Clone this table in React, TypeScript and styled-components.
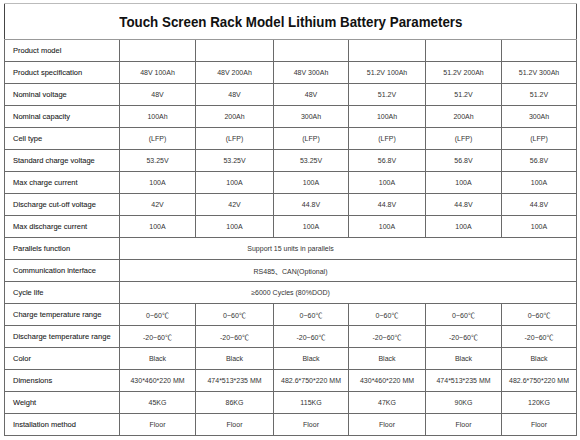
import * as React from "react";
import styled, { createGlobalStyle } from "styled-components";

const GlobalStyle = createGlobalStyle`
  html, body {
    margin: 0;
    padding: 0;
    background: #fff;
  }
  body {
    font-family: "Liberation Sans", "Noto Sans CJK SC", Arial, sans-serif;
  }
`;

const Page = styled.div`
  width: 580px;
  height: 440px;
  padding: 3px 0 0 4px;
  box-sizing: border-box;
`;

const Table = styled.table`
  width: 573px;
  border-collapse: collapse;
  table-layout: fixed;
  border-right: 1px solid #555;
  border-bottom: 1px solid #555;
  border-left: 1px solid #444;
`;

const TitleCell = styled.th`
  height: 35px;
  padding: 0;
  border-top: 1px solid #bbb;
  border-bottom: 1px solid #999;
  text-align: center;
  vertical-align: middle;
`;

const Title = styled.span`
  display: inline-block;
  font-size: 15px;
  font-weight: 700;
  color: #111;
  transform: scaleX(0.89);
  white-space: nowrap;
`;

const Row = styled.tr`
  height: 22px;
`;

const Label = styled.td`
  padding: 0 0 0 8px;
  border: 1px solid #6a6a6a;
  font-size: 7.5px;
  color: #1a1a1a;
  -webkit-text-stroke: 0.08px #1a1a1a;
  white-space: nowrap;
  overflow: hidden;
`;

const Cell = styled.td`
  padding: 0;
  border: 1px solid #6a6a6a;
  font-size: 7px;
  color: #333;
  text-align: center;
  white-space: nowrap;
`;

const SpanCell = styled(Cell)`
  padding-right: 115px;
`;

const widths = [115, 76, 78, 75, 77, 76, 75];

type Spec = { label: string; values?: string[]; span?: string };

const six = (v: string) => [v, v, v, v, v, v];

const specs: Spec[] = [
  { label: "Product model", values: six("") },
  {
    label: "Product specification",
    values: ["48V 100Ah", "48V 200Ah", "48V 300Ah", "51.2V 100Ah", "51.2V 200Ah", "51.2V 300Ah"],
  },
  { label: "Nominal voltage", values: ["48V", "48V", "48V", "51.2V", "51.2V", "51.2V"] },
  { label: "Nominal capacity", values: ["100Ah", "200Ah", "300Ah", "100Ah", "200Ah", "300Ah"] },
  { label: "Cell type", values: six("(LFP)") },
  {
    label: "Standard charge voltage",
    values: ["53.25V", "53.25V", "53.25V", "56.8V", "56.8V", "56.8V"],
  },
  { label: "Max charge current", values: six("100A") },
  {
    label: "Discharge cut-off voltage",
    values: ["42V", "42V", "44.8V", "44.8V", "44.8V", "44.8V"],
  },
  { label: "Max discharge current", values: six("100A") },
  { label: "Parallels function", span: "Support 15 units in parallels" },
  { label: "Communication interface", span: "RS485、CAN(Optional)" },
  { label: "Cycle life", span: "≥6000 Cycles (80%DOD)" },
  { label: "Charge temperature range", values: six("0~60℃") },
  { label: "Discharge temperature range", values: six("-20~60℃") },
  { label: "Color", values: six("Black") },
  {
    label: "Dimensions",
    values: [
      "430*460*220 MM",
      "474*513*235 MM",
      "482.6*750*220 MM",
      "430*460*220 MM",
      "474*513*235 MM",
      "482.6*750*220 MM",
    ],
  },
  { label: "Weight", values: ["45KG", "86KG", "115KG", "47KG", "90KG", "120KG"] },
  { label: "Installation method", values: six("Floor") },
];

const App = () => (
  <Page>
    <GlobalStyle />
    <Table>
      <colgroup>
        {widths.map((w, i) => (
          <col key={i} style={{ width: w }} />
        ))}
      </colgroup>
      <thead>
        <tr>
          <TitleCell colSpan={7}>
            <Title>Touch Screen Rack Model Lithium Battery Parameters</Title>
          </TitleCell>
        </tr>
      </thead>
      <tbody>
        {specs.map((s) => (
          <Row key={s.label}>
            <Label>{s.label}</Label>
            {s.span ? (
              <SpanCell colSpan={6}>{s.span}</SpanCell>
            ) : (
              s.values!.map((v, i) => <Cell key={i}>{v}</Cell>)
            )}
          </Row>
        ))}
      </tbody>
    </Table>
  </Page>
);

export default App;
